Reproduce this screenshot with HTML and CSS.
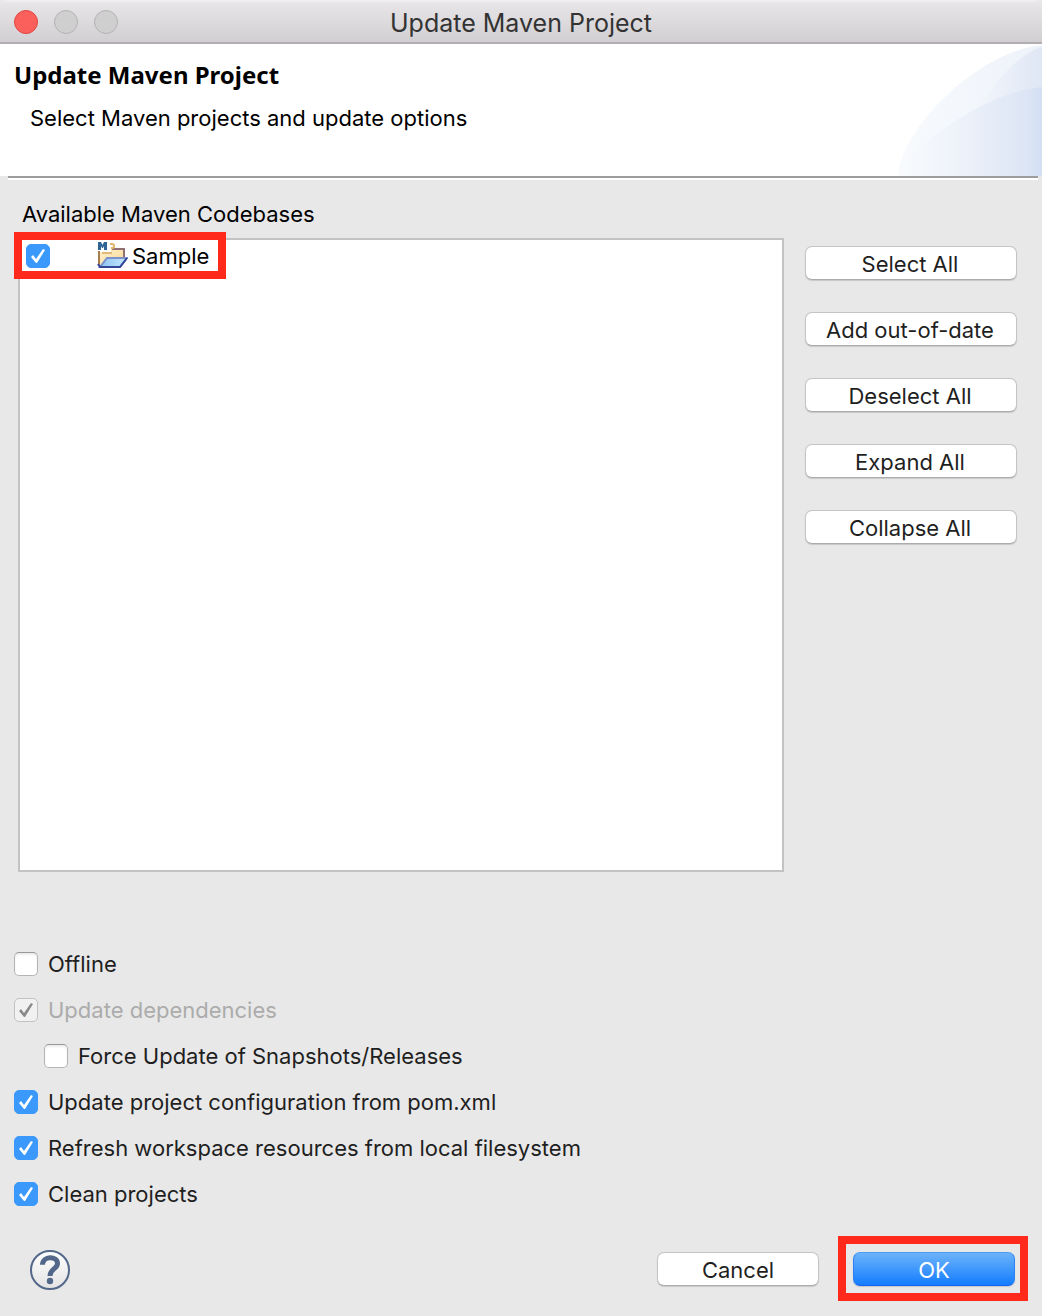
FILE: index.html
```html
<!DOCTYPE html>
<html lang="en">
<head>
<meta charset="utf-8">
<title>Update Maven Project</title>
<link rel="stylesheet" href="styles.css">
</head>
<body>
<div class="window">
  <div class="titlebar">
    <div class="lights">
      <button class="light light-close" type="button" aria-label="Close"></button>
      <button class="light" type="button" aria-label="Minimize" disabled></button>
      <button class="light" type="button" aria-label="Zoom" disabled></button>
    </div>
    <div class="titlebar-text">Update Maven Project</div>
  </div>

  <header class="banner">
    <div class="banner-text">
      <h1>Update Maven Project</h1>
      <p>Select Maven projects and update options</p>
    </div>
    <svg class="banner-art" viewBox="0 0 145 132" aria-hidden="true">
      <defs>
        <linearGradient id="outer" x1="0" x2="1" y1="0" y2="0"><stop offset="0" stop-color="#f8fafd"/><stop offset="1" stop-color="#eef3fa"/></linearGradient>
        <linearGradient id="upper" x1="0" x2="1" y1="0" y2="0"><stop offset="0" stop-color="#f2f5fb"/><stop offset="1" stop-color="#dfe7f5"/></linearGradient>
        <linearGradient id="lower" x1="0" x2="1" y1="0" y2="0"><stop offset="0" stop-color="#f9fbfd"/><stop offset=".5" stop-color="#ebf0f9"/><stop offset=".9" stop-color="#dce5f5"/><stop offset="1" stop-color="#d3def3"/></linearGradient>
      </defs>
      <path d="M1 132C3 86 80 7 145 1V132Z" fill="url(#outer)"/>
      <path d="M82 64C99 37 121 10 145 3V132H82Z" fill="url(#upper)"/>
      <path d="M1 132Q7 119 17 108C55 77 95 49 145 43V132Z" fill="url(#lower)"/>
    </svg>
  </header>
  <div class="separator"></div>

  <main class="content">
    <div class="list-label" id="list-label">Available Maven Codebases</div>
    <div class="projects">
      <div class="tree" role="group" aria-labelledby="list-label">
        <label class="tree-row">
          <input class="check" type="checkbox" checked>
          <svg class="folder" viewBox="0 0 32 32" aria-hidden="true">
            <defs>
              <linearGradient id="paper" x1="0" x2="1" y1="0" y2="1"><stop offset="0" stop-color="#fff3cf"/><stop offset="1" stop-color="#f6d590"/></linearGradient>
              <linearGradient id="flap" x1="0" x2="1" y1="0" y2="0"><stop offset="0" stop-color="#8fc4f2"/><stop offset="1" stop-color="#c4e8fd"/></linearGradient>
            </defs>
            <path d="M3 26V12H6L8 14H15V9H28V18H10Z" fill="url(#paper)"/>
            <path d="M3 26V11" fill="none" stroke="#a87d4e" stroke-width="2"/>
            <path d="M6 13H16" fill="none" stroke="#e0b878" stroke-width="2"/>
            <path d="M16 9H29M28 9V17" fill="none" stroke="#917073" stroke-width="2"/>
            <path d="M2 2H5L6.500 5L8 2H11V10H8V6L7 8H6L5 6V10H2Z" fill="#2f6596"/>
            <path d="M14 4H16Q18 4 18 6V7Q18 8 15 8" fill="none" stroke="#e6b66b" stroke-width="2"/>
            <path d="M11 18H31L24 27H4Z" fill="url(#flap)" stroke="#7c92c8" stroke-width="2"/>
            <path d="M31 18L24 27H4L2 24" fill="none" stroke="#33469a" stroke-width="2"/>
          </svg>
          <span>Sample</span>
        </label>
        <div class="highlight highlight-row"></div>
      </div>
      <div class="side-buttons">
        <button class="btn" type="button">Select All</button>
        <button class="btn" type="button">Add out-of-date</button>
        <button class="btn" type="button">Deselect All</button>
        <button class="btn" type="button">Expand All</button>
        <button class="btn" type="button">Collapse All</button>
      </div>
    </div>

    <div class="options">
      <label class="option"><input class="check" type="checkbox"><span>Offline</span></label>
      <label class="option option-off"><input class="check" type="checkbox" checked disabled><span>Update dependencies</span></label>
      <label class="option option-nested"><input class="check" type="checkbox"><span>Force Update of Snapshots/Releases</span></label>
      <label class="option"><input class="check" type="checkbox" checked><span>Update project configuration from pom.xml</span></label>
      <label class="option"><input class="check" type="checkbox" checked><span>Refresh workspace resources from local filesystem</span></label>
      <label class="option"><input class="check" type="checkbox" checked><span>Clean projects</span></label>
    </div>
  </main>

  <footer class="footer">
    <button class="help" type="button" aria-label="Help">
      <svg viewBox="0 0 40 40" aria-hidden="true">
        <defs><linearGradient id="disc" x1="0" x2="0" y1="0" y2="1"><stop offset="0" stop-color="#fff"/><stop offset="1" stop-color="#e3e3e3"/></linearGradient></defs>
        <circle cx="20" cy="20" r="19" fill="url(#disc)" stroke="#53678a" stroke-width="2"/>
        <path d="M12.500 14.800C12.500 5.500 27.500 5.500 27.500 13.500C27.500 19 20 18.500 20 26" fill="none" stroke="#53678a" stroke-width="5"/>
        <circle cx="20" cy="31" r="3.200" fill="#53678a"/>
      </svg>
    </button>
    <div class="actions">
      <button class="btn" type="button">Cancel</button>
      <div class="primary-wrap">
        <button class="btn btn-primary" type="button">OK</button>
        <div class="highlight highlight-ok"></div>
      </div>
    </div>
  </footer>
</div>
</body>
</html>
```
FILE: styles.css
```css
* { box-sizing: border-box; }

body {
  margin: 0;
  background: #e8e8e8;
  color: #1f1f1f;
  font: 22px/28px Inter, "Liberation Sans", sans-serif;
}

.window {
  display: flex;
  flex-direction: column;
  min-height: 100vh;
}

.titlebar {
  display: grid;
  grid-template-columns: 1fr auto 1fr;
  align-items: center;
  height: 44px;
  padding: 2px 14px 0;
  border-bottom: 2px solid #b0aeb0;
  border-radius: 8px 8px 0 0;
  background: linear-gradient(#f4f3f4, #e7e5e7 3px, #d1cfd1);
}

.titlebar-text {
  padding-top: 2px;
  color: #333;
  font-size: 25px;
}

.lights { display: flex; gap: 16px; }

.light {
  width: 24px;
  height: 24px;
  padding: 0;
  border: 1px solid #b4b3b4;
  border-radius: 50%;
  background: #d0cfd0;
}

.light-close { border-color: #e14640; background: #fc605c; }

.banner {
  display: flex;
  justify-content: space-between;
  background: #fff;
  color: #000;
}

.banner-text { padding: 15px 0 0 14px; }

.banner h1 {
  margin: 0;
  font: bold 24px/32px "Noto Sans", "Open Sans", sans-serif;
}

.banner p { margin: 13px 0 0 16px; }

.banner-art {
  display: block;
  flex: none;
  width: 145px;
  height: 132px;
}

.separator {
  height: 4px;
  margin: 0 4px 0 8px;
  border-top: 2px solid #9d9d9d;
  background: #fff;
}

.content {
  display: flex;
  flex: 1;
  flex-direction: column;
  padding: 20px 25px 0 14px;
}

.list-label { padding-left: 8px; color: #000; }

.projects {
  display: flex;
  flex: 1;
  gap: 21px;
  margin: 10px 0 69px 4px;
}

.tree {
  position: relative;
  flex: 1;
  min-height: 200px;
  border: 2px solid #c3c3c3;
  background: #fff;
  color: #000;
}

.tree-row {
  display: flex;
  align-items: center;
  height: 32px;
  padding-left: 6px;
}

.folder { width: 32px; height: 32px; margin: 0 4px 0 46px; }

.highlight {
  position: absolute;
  border: 8px solid #ff2a1c;
  pointer-events: none;
}

.highlight-row { top: -8px; left: -6px; width: 212px; height: 47px; }

.side-buttons {
  display: flex;
  flex-direction: column;
  gap: 32px;
  width: 212px;
  padding-top: 8px;
}

.btn {
  height: 34px;
  padding: 2px 2px 0 0;
  border: 1px solid #c4c4c4;
  border-bottom-color: #acacac;
  border-radius: 7px;
  background: #fff;
  box-shadow: 0 1px 1px #c8c8c8;
  color: #1f1f1f;
  font: inherit;
}

.options {
  display: flex;
  flex-direction: column;
  gap: 18px;
  padding-top: 9px;
}

.option {
  display: flex;
  align-items: center;
  gap: 10px;
  align-self: flex-start;
}

.option-nested { margin-left: 30px; }
.option-off { color: #acacac; }

.check {
  display: grid;
  flex: none;
  width: 24px;
  height: 24px;
  margin: 0;
  border: 1px solid #b5b5b5;
  border-top-color: #989898;
  border-radius: 5px;
  appearance: none;
  background: #fff;
  box-shadow: inset 0 2px 2px #ececec;
}

.check:checked {
  border-color: #3b99fc;
  background: #3b99fc;
  box-shadow: none;
}

.check:checked::before {
  content: "";
  background: #fff;
  clip-path: polygon(4px 12px, 6px 10px, 9px 14px, 16px 4px, 18px 5px, 10px 18px, 9px 18px);
}

.check:disabled { border-color: #c2c2c2; background: #f1f1f1; }
.check:disabled::before { background: #8a8a8a; }

.footer {
  display: flex;
  align-items: center;
  justify-content: space-between;
  padding: 42px 27px 26px 30px;
}

.help {
  width: 40px;
  height: 40px;
  padding: 0;
  border: 0;
  background: none;
}

.help svg { display: block; }

.actions { display: flex; gap: 34px; padding-bottom: 2px; }
.actions .btn { width: 162px; padding-right: 0; }
.primary-wrap { position: relative; }

.btn-primary {
  display: block;
  border-color: #4a9df5 #2b80f5 #1266f0;
  background: linear-gradient(#6cb3fa, #147dff);
  color: #fff;
}

.highlight-ok { top: -16px; left: -15px; width: 190px; height: 65px; }
```
